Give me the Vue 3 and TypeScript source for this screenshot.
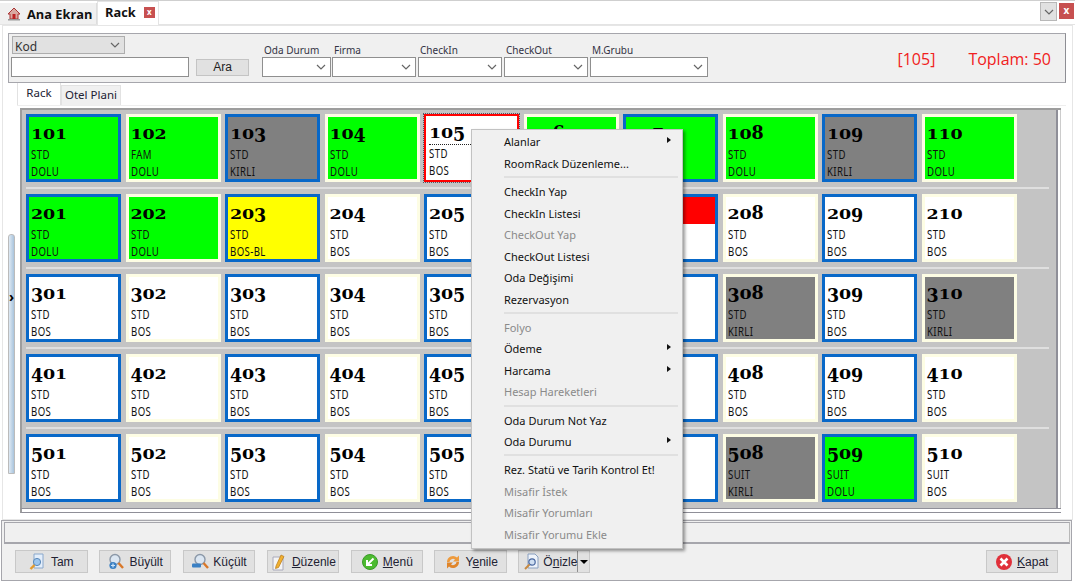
<script setup lang="ts">
interface Room { no: number; type: string; state: string; kind: string; blue: boolean; digits: { d: string; cls: string }[]; }
const kinds: Record<string, string> = {
  101:'green',102:'green',103:'gray',104:'green',105:'picked',106:'green',107:'green',108:'green',109:'gray',110:'green',
  201:'green',202:'green',203:'yellow',207:'redtop',308:'gray',310:'gray',508:'gray',509:'green'
};
const states: Record<string,string> = { green:'DOLU', gray:'KIRLI', yellow:'BOS-BL', picked:'BOS', white:'BOS', redtop:'BOS' };
// old-style figures: 0 1 2 sit at x-height, 3 4 5 7 9 descend, 6 8 ascend
const digitClass = (d: string) => ('012'.includes(d) ? 'low' : '34579'.includes(d) ? 'desc' : 'high');
const rows: Room[][] = [100,200,300,400,500].map(base =>
  Array.from({length:10},(_,i) => {
    const no = base+i+1;
    const kind = kinds[no] ?? 'white';
    let type = 'STD';
    if (no===102) type='FAM';
    if (no>=508 && no<=510) type='SUIT';
    const digits = String(no).split('').map(d => ({ d, cls: digitClass(d) }));
    return { no, type, state: states[kind], kind, blue: i%2===0 && kind!=='picked', digits };
  })
);
interface Item { t: string; off?: boolean; sub?: boolean; sep?: boolean; }
const menu: Item[] = [
  {t:'Alanlar',sub:true},{t:'RoomRack Düzenleme...'},{t:'',sep:true},
  {t:'CheckIn Yap'},{t:'CheckIn Listesi'},{t:'CheckOut Yap',off:true},{t:'CheckOut Listesi'},{t:'Oda Değişimi'},{t:'Rezervasyon'},{t:'',sep:true},
  {t:'Folyo',off:true},{t:'Ödeme',sub:true},{t:'Harcama',sub:true},{t:'Hesap Hareketleri',off:true},{t:'',sep:true},
  {t:'Oda Durum Not Yaz'},{t:'Oda Durumu',sub:true},{t:'',sep:true},
  {t:'Rez. Statü ve Tarih Kontrol Et!'},{t:'Misafir İstek',off:true},{t:'Misafir Yorumları',off:true},{t:'Misafir Yorumu Ekle',off:true}
];
const filters = [
  {label:'Oda Durum',w:69},{label:'Firma',w:84},{label:'CheckIn',w:84},{label:'CheckOut',w:84},{label:'M.Grubu',w:118}
];
</script>

<template>
  <div class="page">
    <div class="topbar">
      <div class="tab home">
        <svg width="14" height="14" viewBox="0 0 14 14"><path d="M7 1 L1 7 H3 V12 H11 V7 H13 Z" fill="#d9a8a0" stroke="#a33" stroke-width="1"/><rect x="5.5" y="7" width="3" height="5" fill="#b22"/><rect x="1" y="12" width="12" height="1.5" fill="#999"/></svg>
        <span>Ana Ekran</span>
      </div>
      <div class="tab rack">
        <span>Rack</span>
        <span class="tabx">x</span>
      </div>
      <div class="top-right">
        <span class="dd"><svg width="10" height="6" viewBox="0 0 10 6"><path d="M1 1 L5 5 L9 1" fill="none" stroke="#666" stroke-width="1.2"/></svg></span>
        <span class="closex">x</span>
      </div>
    </div>

    <div class="content">
      <div class="filter">
        <div class="search">
          <div class="kod"><span>Kod</span><svg width="10" height="6" viewBox="0 0 10 6"><path d="M1 1 L5 5 L9 1" fill="none" stroke="#666" stroke-width="1.2"/></svg></div>
          <div class="search-line">
            <div class="search-input"></div>
            <div class="ara">Ara</div>
          </div>
        </div>
        <div class="fields">
          <div v-for="f in filters" :key="f.label" class="field">
            <label>{{ f.label }}</label>
            <div class="combo" :style="{ width: f.w + 'px' }"><svg width="10" height="6" viewBox="0 0 10 6"><path d="M1 1 L5 5 L9 1" fill="none" stroke="#666" stroke-width="1.2"/></svg></div>
          </div>
        </div>
        <div class="totals"><span class="cur">[105]</span><span class="tot">Toplam: 50</span></div>
      </div>

      <div class="middle">
        <div class="splitter"><span class="grip"></span><span class="arrow">›</span></div>
        <div class="main">
          <div class="subtabs">
            <div class="subtab active">Rack</div>
            <div class="subtab">Otel Plani</div>
          </div>
          <div class="frame">
            <div class="rack-area">
              <div v-for="(row,ri) in rows" :key="ri" class="row" :class="{ last: ri===4 }">
                <div v-for="r in row" :key="r.no" class="cell" :class="[r.kind, { blue: r.blue }]">
                  <div v-if="r.kind==='redtop'" class="redband"></div>
                  <div class="no"><span v-for="(g,gi) in r.digits" :key="gi" :class="g.cls">{{ g.d }}</span></div>
                  <div class="lines">
                    <div>{{ r.type }}</div>
                    <div>{{ r.state }}</div>
                  </div>
                </div>
              </div>
            </div>
            <div class="frame-side"></div>
          </div>
          <div class="frame-bottom"></div>
        </div>
      </div>
    </div>

    <div class="footer">
      <div class="status"></div>
      <div class="buttons">
        <div class="btn">
          <svg width="18" height="18" viewBox="0 0 18 18"><path d="M5 1 H14 V15 H5 Z" fill="#e3eefb" stroke="#8aa8cc"/><circle cx="8" cy="9" r="3.6" fill="#9cc6ef" stroke="#5b88b8"/><path d="M5.5 12 L1.5 16" stroke="#e39a2d" stroke-width="2.4"/></svg>
          <span>Tam</span>
        </div>
        <div class="btn">
          <svg width="18" height="18" viewBox="0 0 18 18"><circle cx="8" cy="6.5" r="5" fill="#dbe6f2" stroke="#8b98a8" stroke-width="1.4"/><path d="M11.5 10 L16 15" stroke="#d9782a" stroke-width="2.4"/><circle cx="6" cy="12.5" r="3.6" fill="#3a80c4"/><path d="M4 12.5 H8 M6 10.5 V14.5" stroke="#cfe4f8" stroke-width="1.2"/></svg>
          <span>Büyült</span>
        </div>
        <div class="btn">
          <svg width="18" height="18" viewBox="0 0 18 18"><circle cx="9" cy="6.5" r="5" fill="#dbe6f2" stroke="#8b98a8" stroke-width="1.4"/><path d="M12.5 10 L17 15" stroke="#d9782a" stroke-width="2.4"/><rect x="1" y="10.5" width="9" height="4" rx="1" fill="#3a80c4"/></svg>
          <span>Küçült</span>
        </div>
        <div class="btn">
          <svg width="18" height="18" viewBox="0 0 18 18"><path d="M3 4 H13 V17 H3 Z" fill="#f4f4f4" stroke="#aab"/><path d="M6 13 L11 2 L14 3.5 L8.5 14.5 L5.5 15.5 Z" fill="#f0b030" stroke="#b87818" stroke-width=".7"/></svg>
          <span><u>D</u>üzenle</span>
        </div>
        <div class="btn">
          <svg width="18" height="18" viewBox="0 0 18 18"><circle cx="9" cy="9" r="7.5" fill="#4cbb30" stroke="#3a9a28"/><path d="M12.5 5.5 L6.5 11.5 M6 7 V12 H11" fill="none" stroke="#fff" stroke-width="2"/></svg>
          <span><u>M</u>enü</span>
        </div>
        <div class="btn">
          <svg width="18" height="18" viewBox="0 0 18 18"><path d="M3 9 A6 6 0 0 1 13 4.5 L15 2.5 V8.5 H9 L11 6.5 A3.5 3.5 0 0 0 5.5 9 Z" fill="#ee9a3c"/><path d="M15 9 A6 6 0 0 1 5 13.5 L3 15.5 V9.5 H9 L7 11.5 A3.5 3.5 0 0 0 12.5 9 Z" fill="#e0852a"/></svg>
          <span>Y<u>e</u>nile</span>
        </div>
        <div class="btn split">
          <div class="split-main">
            <svg width="18" height="18" viewBox="0 0 18 18"><path d="M5 1 H12 L15 4 V15 H5 Z" fill="#eef3fa" stroke="#8aa0c0"/><circle cx="9" cy="9" r="3.2" fill="#cfdff2" stroke="#4a68a0" stroke-width="1.2"/><path d="M6.5 11.5 L2 16" stroke="#c88a40" stroke-width="2"/></svg>
            <span>Ö<u>n</u>izle</span>
          </div>
          <div class="split-arrow"><i></i></div>
        </div>
        <div class="spacer"></div>
        <div class="btn">
          <svg width="18" height="18" viewBox="0 0 18 18"><circle cx="9" cy="9" r="8" fill="#e0303a"/><path d="M5.5 5.5 L12.5 12.5 M12.5 5.5 L5.5 12.5" stroke="#fff" stroke-width="2.6"/></svg>
          <span><u>K</u>apat</span>
        </div>
      </div>
    </div>

    <div class="menu">
      <template v-for="(m,i) in menu" :key="i">
        <div v-if="m.sep" class="sep"></div>
        <div v-else class="item" :class="{ off: m.off }">
          <span>{{ m.t }}</span><i v-if="m.sub" class="caret"></i>
        </div>
      </template>
    </div>
  </div>
</template>

<style>
html, body { margin: 0; background: #fff; }
</style>
<style scoped>
.page { position: relative; width: 1075px; height: 584px; overflow: hidden; background: #fff; font-family: "Noto Sans", "Open Sans", sans-serif; font-size: 11px; color: #222; box-sizing: border-box; border-top: 1px solid #cfcfcf; }
.page * { box-sizing: border-box; }

.topbar { height: 24px; display: flex; align-items: flex-end; border-bottom: 1px solid #e4e4e4; position: relative; }
.tab { display: flex; align-items: center; font-family: "Open Sans", sans-serif; font-weight: 700; font-size: 12.8px; color: #111; }
.tab.home { width: 97px; height: 21px; background: #f0f0f0; border-right: 1px solid #ddd; padding-left: 7px; gap: 6px; }
.tab.rack { width: 62px; height: 24px; background: #fff; border: 1px solid #e4e4e4; border-bottom: 0; padding-left: 7px; gap: 8px; margin-bottom: -1px; padding-bottom: 3px; }
.tabx { width: 11px; height: 11px; background: #c75050; color: #fff; font-size: 8px; line-height: 10px; text-align: center; }
.top-right { position: absolute; right: 1px; top: 1px; display: flex; gap: 2px; align-items: flex-start; }
.dd { width: 17px; height: 19px; background: #e1e1e1; border: 1px solid #b8b8b8; display: flex; align-items: center; justify-content: center; }
.closex { width: 15px; height: 16px; margin-top: 1px; background: #c75050; color: #fff; font-weight: 700; font-size: 10px; line-height: 14px; text-align: center; }

.content { margin: 0 2px; height: 495px; border: 1px solid #e6e6e6; padding: 7px 6px 0 5px; }

.filter { height: 50px; background: #f0f0f0; border: 1px solid #a6a6ac; border-right-color: #8e8e94; display: flex; position: relative; padding: 2px 2px; }
.search { width: 179px; display: flex; flex-direction: column; gap: 3px; }
.kod { width: 113px; height: 18px; margin-left: 1px; background: #e1e1e1; border: 1px solid #adadad; font-size: 12px; line-height: 15px; padding-left: 2px; display: flex; align-items: center; justify-content: space-between; padding-right: 4px; color: #333; }
.kod span { padding-top: 2px; }
.search-line { display: flex; gap: 7px; align-items: center; width: 240px; }
.search-input { width: 178px; height: 20px; background: #fff; border: 1px solid #8f8f8f; }
.ara { width: 53px; height: 17px; background: #e1e1e1; border: 1px solid #c4c4c4; text-align: center; line-height: 15px; font-family: "Liberation Sans", sans-serif; font-size: 12px; margin-top: 1px; }
.fields { display: flex; gap: 1px; margin-left: 72px; margin-top: 7px; }
.field { display: flex; flex-direction: column; }
.field:nth-child(n+3) { margin-left: 1px; }
.field label { font-size: 10px; line-height: 14px; padding-left: 2px; color: #334; height: 14px; white-space: nowrap; }
.combo { height: 20px; background: #fff; border: 1px solid #8f8f8f; display: flex; align-items: center; justify-content: flex-end; padding-right: 4px; }
.totals { position: absolute; top: 15px; right: 14px; display: flex; gap: 33px; font-family: "Open Sans", sans-serif; font-size: 16px; color: #f02020; line-height: 20px; }

.middle { display: flex; }
.splitter { width: 9px; position: relative; flex: none; }
.grip { position: absolute; left: 0; top: 151px; width: 7px; height: 240px; background: linear-gradient(90deg,#dfe9f3,#a8c4dd); border: 1px solid #bbb; border-radius: 3px 3px 0 0; }
.arrow { position: absolute; left: 1px; top: 207px; font-size: 14px; font-weight: 700; line-height: 14px; color: #000; }
.main { flex: 1; }
.subtabs { display: flex; height: 23px; align-items: flex-end; border-bottom: 1px solid #eee; }
.subtab { height: 20px; width: 60px; background: #f0f0f0; border: 1px solid #e2e2e2; border-bottom: 0; text-align: center; font-size: 11.5px; line-height: 18px; color: #223; }
.subtab.active { width: 44px; height: 23px; background: #fff; line-height: 19px; padding-bottom: 2px; }
.frame { margin: 2px 0 0 3px; width: 1041px; height: 400px; display: flex; border-top: 2px solid #9d9d9d; border-left: 2px solid #9d9d9d; background: #c4c4c4; }
.rack-area { width: 1034px; padding: 4px 0 0 4px; flex: none; }
.frame-side { flex: 1; background: #fff; border-left: 2px solid #8f8f98; border-right: 1px solid #ccc; }
.frame-bottom { margin-left: 3px; width: 1041px; height: 5px; background: #fff; border-top: 1px solid #8f8f98; border-bottom: 1px solid #8f8f98; border-left: 2px solid #9d9d9d; }

.row { display: grid; grid-template-columns: repeat(10, 95px); column-gap: 4.5px; width: 1023px; padding-bottom: 5px; margin-bottom: 5px; border-bottom: 2px solid #dfdfdf; }
.row.last { border-bottom: 0; margin-bottom: 0; padding-bottom: 0; }
.cell { height: 68px; border: 3px solid #fdfde4; padding: 0 0 0 2px; position: relative; color: #111; }
.cell.blue { border-color: #0868c8; }
.cell.white, .cell.redtop { background: #fff; }
.cell.green { background: #00ff00; }
.cell.gray { background: #808080; }
.cell.yellow { background: #ffff00; }
.cell.picked { background: #fff; border: 2px solid #f00; outline: 1px dotted #556; outline-offset: 0; padding-left: 3px; }
.cell.picked .no { border-bottom: 1px dotted #222; }
.redband { position: absolute; left: 0; right: 0; top: 0; height: 27px; background: #f00; }
.no { font-family: "DejaVu Serif", "Liberation Serif", serif; font-weight: 700; font-size: 17.5px; line-height: 22px; height: 29px; padding-top: 5px; color: #000; position: relative; letter-spacing: -0.2px; }
.no span { display: inline-block; transform-origin: 50% 81%; }
.no .low { transform: scaleY(.78); }
.no .desc { transform: translateY(3px) scaleY(1.05); }
.no .high { transform: scaleY(1.05); }
.lines { font-family: "Noto Sans", sans-serif; font-size: 12px; line-height: 16.5px; letter-spacing: .5px; padding-top: 1px; }
.lines div { transform: scaleX(.8); transform-origin: 0 50%; white-space: nowrap; }

.footer { position: absolute; left: 1px; right: 3px; top: 519px; height: 61px; background: #f0f0f0; border: 1px solid #a6a6ac; padding: 1px 1px 0 2px; }
.status { height: 22px; border: 1px solid #a6a6ac; border-bottom-width: 2px; border-right-color: #b8b8b8; background: #f0f0f0; }
.buttons { display: flex; padding: 6px 12px 0 11px; gap: 11.4px; }
.btn { width: 72.5px; height: 23px; background: #e1e1e1; border: 1px solid #c8c8c8; display: flex; align-items: center; justify-content: center; gap: 4px; font-family: "Liberation Sans", sans-serif; font-size: 12px; color: #223; }
.btn.split { width: 72px; gap: 0; padding: 0; justify-content: flex-start; }
.split-main { flex: 1; display: flex; align-items: center; gap: 2px; padding-left: 4px; height: 100%; border-right: 1px solid #8f8f8f; }
.split-arrow { width: 13px; height: 100%; display: flex; align-items: center; justify-content: center; }
.split-arrow i { width: 0; height: 0; border: 4px solid transparent; border-top-color: #000; border-bottom: 0; }
.spacer { flex: 1; }

.menu { position: absolute; left: 471px; top: 128px; width: 212px; height: 420px; background: #f0f0f0; border: 1px solid #c2c2c2; box-shadow: 2px 2px 3px rgba(0,0,0,.4); padding: 1px 2px; font-family: "Noto Sans", sans-serif; font-size: 11px; color: #111; }
.item { height: 21.55px; padding-left: 30px; display: flex; align-items: center; position: relative; white-space: nowrap; }
.item.off { color: #8a8a8a; }
.caret { position: absolute; right: 9px; top: 6px; width: 0; height: 0; border: 3.5px solid transparent; border-left: 4px solid #111; border-right: 0; }
.sep { height: 2px; margin: 2px 2px 2.6px 30px; background: #e0e0e0; }
</style>
